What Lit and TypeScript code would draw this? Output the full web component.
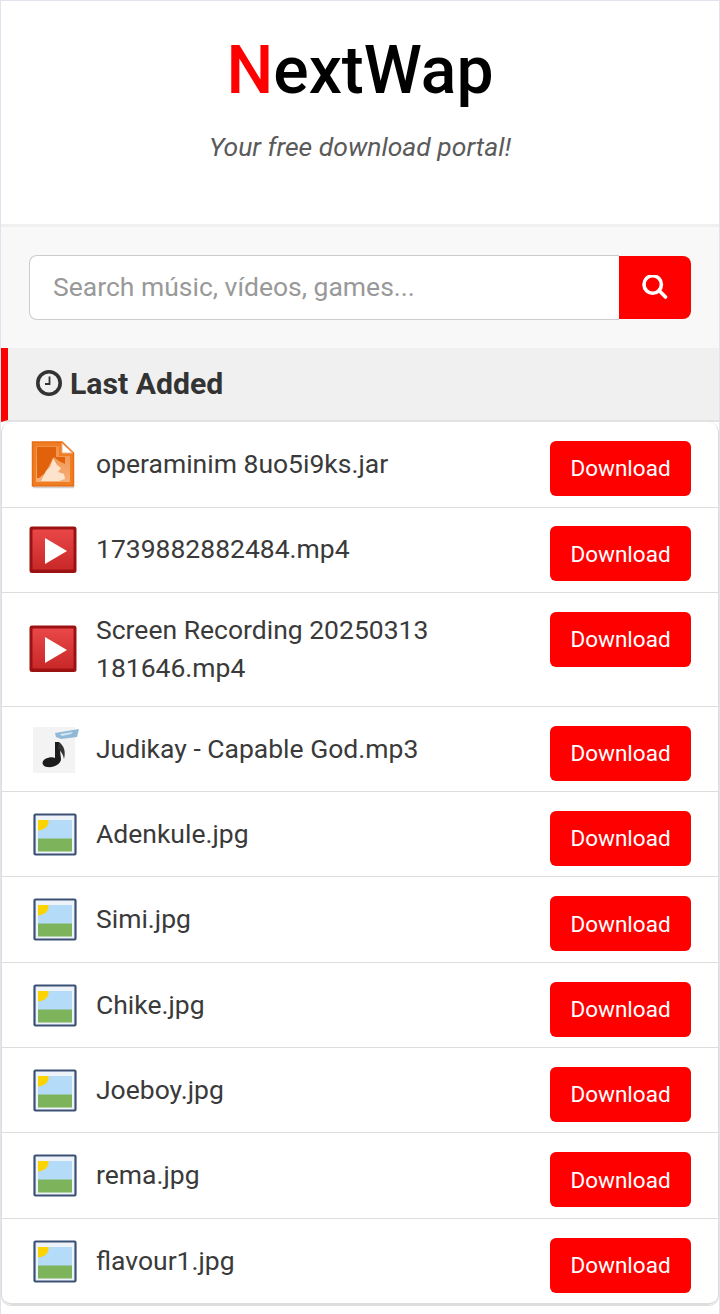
import { LitElement, html, css, svg } from "lit";
import { customElement } from "lit/decorators.js";

const icons: Record<string, any> = {
  jar: svg`<defs><linearGradient id="oj" x1="0" y1="0" x2="0" y2="1"><stop offset="0" stop-color="#f09048"/><stop offset="1" stop-color="#f6ae78"/></linearGradient></defs>
    <path d="M3.5 2H33L44.5 13V46H3.5Z" fill="#ef7d22" stroke="#e86c14" stroke-width="1.5"/>
    <path d="M7 6H30V16H41V42H7Z" fill="url(#oj)"/>
    <path d="M8 7H27V17H36V24L30 21 25 17 21 24 16 33 10 38H8Z" fill="#e2620c"/>
    <path d="M33 3L43.5 13H33Z" fill="#fff" stroke="#eeb186" stroke-width="1"/>
    <path d="M12 41L17 31 21 27 24 18 28 25 32 28 29 32 35 34 36 39 30 41Z" fill="#fde3cc"/>
    <path d="M4 47.5H45" stroke="#d0d0d0" stroke-width="1.5"/>`,
  video: svg`<defs><linearGradient id="rv" x1="0" y1="0" x2="0" y2="1"><stop offset="0" stop-color="#ea4848"/><stop offset="1" stop-color="#c92828"/></linearGradient></defs>
    <rect x="0.5" y="0.5" width="47" height="46.5" rx="2.5" fill="#9c1212"/>
    <rect x="3.5" y="3.5" width="41" height="40" rx="1" fill="url(#rv)"/>
    <path d="M16 12L38 25 16 38Z" fill="#fff"/>`,
  audio: svg`<rect x="4" y="2" width="42" height="46" fill="#f3f3f3"/>
    <path d="M26 8L50 4 48 12 32 14 27 12Z" fill="#8fb9d6"/>
    <path d="M31 9L44 7 42 9 33 11Z" fill="#d3e7f3"/>
    <path d="M26 17H30L32 34C32 39 25 43 18 42 13 41 12 37 16 34 20 32 24 32 26 33Z" fill="#1c1c1c"/>
    <path d="M30 17C35 21 37 26 35 34 34 29 32 26 29 24Z" fill="#333"/>`,
  image: svg`<rect x="5.5" y="4.5" width="41" height="40" rx="1" fill="#eef3f9" stroke="#3a5074" stroke-width="2.2"/>
    <rect x="9" y="10" width="34" height="19" fill="#b4dcf8"/>
    <path d="M9 10H19.5C20 15 17 20 9 20.5Z" fill="#fbd400"/>
    <rect x="9" y="28.5" width="34" height="13" fill="#7db35a"/>`,
};

const rows: [string, string][] = [
  ["jar", "operaminim 8uo5i9ks.jar"],
  ["video", "1739882882484.mp4"],
  ["video", "Screen Recording 20250313 181646.mp4"],
  ["audio", "Judikay - Capable God.mp3"],
  ["image", "Adenkule.jpg"],
  ["image", "Simi.jpg"],
  ["image", "Chike.jpg"],
  ["image", "Joeboy.jpg"],
  ["image", "rema.jpg"],
  ["image", "flavour1.jpg"],
];

@customElement("app-root")
export class AppRoot extends LitElement {
  static styles = css`
    :host {
      display: block;
      font-family: Roboto, sans-serif;
      color: #333;
      background: #fff;
    }
    * { box-sizing: border-box; }
    .page {
      border: 1px solid #e2e3ee;
      border-width: 1px 1px 0 1px;
      min-height: 1314px;
    }
    header {
      height: 226px;
      padding-top: 30px;
      text-align: center;
      border-bottom: 3px solid #f0f0f0;
    }
    h1 {
      margin: 0;
      font-size: 66px;
      line-height: 80px;
      font-weight: 500;
      color: #000;
    }
    h1 span { color: #f00; }
    .tag {
      margin: 18px 0 0;
      font-size: 26.5px;
      line-height: 36px;
      font-style: italic;
      font-weight: 400;
      color: #5a5a5a;
    }
    .search {
      height: 121px;
      padding: 28px 28px 0;
      background: #f8f8f8;
      display: flex;
      align-items: flex-start;
    }
    .input {
      flex: 1;
      height: 65px;
      background: #fff;
      border: 1.33px solid #ccc;
      border-right: 0;
      border-radius: 8px 0 0 8px;
      font: 400 26.5px Roboto, sans-serif;
      color: #999;
      padding: 0 0 2px 23px;
      display: flex;
      align-items: center;
    }
    .go {
      width: 72px;
      height: 63px;
      margin-top: 1px;
      background: #f00;
      border-radius: 0 8px 8px 0;
      display: flex;
      align-items: center;
      justify-content: center;
    }
    .head {
      height: 74px;
      background: #f0f0f0;
      border-left: 7px solid #f00;
      border-bottom: 2px solid #e2e2e2;
      padding: 0 0 2px 28px;
      display: flex;
      align-items: center;
      gap: 8px;
      font-size: 30.2px;
      font-weight: 700;
      color: #333;
    }
    .list {
      border: 1px solid #ddd;
      border-top: 0;
      border-radius: 10px;
      background: #fff;
    }
    .row {
      display: flex;
      align-items: center;
      padding: 0 27px 0 27px;
      border-bottom: 1px solid #ddd;
      min-height: 85.33px;
    }
    .row:first-child { min-height: 85.5px; }
    .row:nth-child(2) { min-height: 85.17px; }
    .row:last-child { min-height: 86.3px; border-bottom-width: 2px; border-radius: 0 0 10px 10px; }
    .ico { width: 48px; height: 48px; flex: none; display: block; filter: blur(0.7px); overflow: visible; }
    .name {
      flex: 1;
      margin-left: 19px;
      padding: 18.1px 100px 18.1px 0;
      font-size: 26.5px;
      line-height: 38.4px;
      color: #3a3a3a;
    }
    .btn {
      align-self: flex-start;
      margin: 18.9px 0 9px;
      width: 141px;
      height: 55px;
      flex: none;
      background: #f00;
      border-radius: 6px;
      color: #fff;
      font-size: 22.5px;
      display: flex;
      align-items: center;
      justify-content: center;
    }
  `;

  render() {
    return html`<div class="page">
      <header>
        <h1><span>N</span>extWap</h1>
        <p class="tag">Your free download portal!</p>
      </header>
      <div class="search">
        <div class="input">Search músic, vídeos, games...</div>
        <div class="go">
          <svg width="26" height="26" viewBox="0 0 26 26" fill="none" stroke="#fff" stroke-width="3.6">
            <circle cx="10.7" cy="9.5" r="8.7"></circle>
            <path d="M17 15.5L23.5 22" stroke-linecap="round"></path>
          </svg>
        </div>
      </div>
      <div class="head">
        <svg width="26" height="26" viewBox="0 0 26 26" fill="none" stroke="#333">
          <circle cx="13" cy="13" r="11.2" stroke-width="3.6"></circle>
          <path d="M13.5 6.5V14H9" stroke-width="1.8"></path>
        </svg>
        <span>Last Added</span>
      </div>
      <div class="list">
        ${rows.map(
          ([k, n]) => html`<div class="row">
            <svg class="ico" viewBox="0 0 48 48">${icons[k]}</svg>
            <div class="name">${n}</div>
            <div class="btn">Download</div>
          </div>`
        )}
      </div>
    </div>`;
  }
}
